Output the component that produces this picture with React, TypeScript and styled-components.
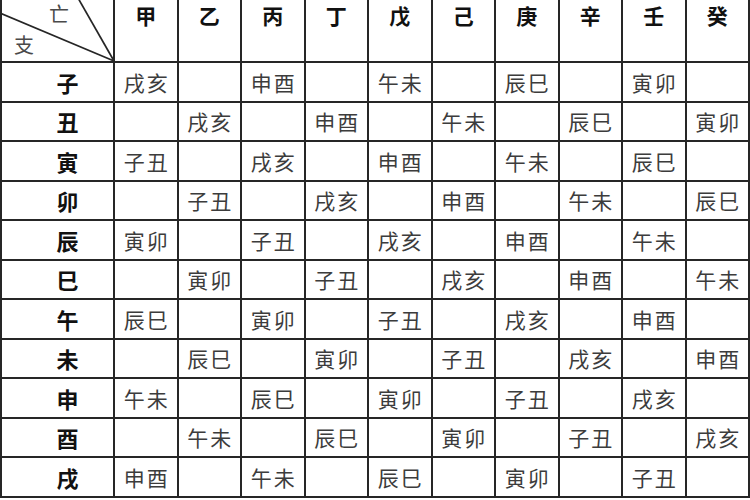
import React from 'react';
import styled, {createGlobalStyle} from 'styled-components';

const GlobalStyle = createGlobalStyle`
  html, body {
    margin: 0;
    padding: 0;
    background: #ffffff;
    overflow: hidden;
  }
  body {
    width: 750px;
    height: 500px;
    font-family: "Noto Sans CJK SC", "Noto Sans", sans-serif;
  }
`;

const lineColor = '#262626';

const stems = ['甲', '乙', '丙', '丁', '戊', '己', '庚', '辛', '壬', '癸'];
const branches = ['子', '丑', '寅', '卯', '辰', '巳', '午', '未', '申', '酉', '戌', '亥'];
// only the rows down to 戌 fit in the frame
const shownBranches = branches.slice(0, 11);

const Table = styled.div`
  display: grid;
  grid-template-columns: 115px repeat(10, 63.5px);
  grid-template-rows: 63px;
  grid-auto-rows: 39.5px;
  width: 750px;
`;

const Cell = styled.div`
  box-sizing: border-box;
  border-right: 2px solid ${lineColor};
  border-bottom: 2px solid ${lineColor};
  display: flex;
  align-items: center;
  justify-content: center;
`;

const Corner = styled(Cell)`
  position: relative;
  border-left: 2px solid ${lineColor};
`;

const CornerLines = styled.svg`
  position: absolute;
  left: 0;
  top: 0;
  overflow: visible;
`;

const CornerLabel = styled.span<{ $left: number; $top: number }>`
  position: absolute;
  left: ${p => p.$left}px;
  top: ${p => p.$top}px;
  font-size: 20px;
  line-height: 20px;
  color: #4a4a4a;
`;

const StemHead = styled(Cell)`
  align-items: flex-start;
  padding-top: 4px;
  font-size: 21px;
  line-height: 22px;
  font-weight: 700;
  color: #111;
`;

const BranchHead = styled(Cell)`
  border-left: 2px solid ${lineColor};
  padding-left: 20px;
  font-size: 22px;
  font-weight: 700;
  color: #111;
`;

const Void = styled(Cell)`
  font-size: 21px;
  letter-spacing: 2px;
  padding-left: 2px;
  color: #3c3c3c;
`;

function voidPair(b: number, s: number) {
  if ((b - s) % 2 !== 0) return '';
  const a = (b - s + 22) % 12;
  const c = (b - s + 23) % 12;
  return branches[a] + branches[c];
}

export default function App() {
  return (
    <>
      <GlobalStyle />
      <Table>
        <Corner>
          <CornerLines width="111" height="61" viewBox="0 0 111 61">
            <line x1="-2" y1="13" x2="112" y2="61" stroke={lineColor} strokeWidth="1.7" />
            <line x1="76" y1="-2" x2="112" y2="61" stroke={lineColor} strokeWidth="1.7" />
          </CornerLines>
          <CornerLabel $left={47} $top={4}>亡</CornerLabel>
          <CornerLabel $left={12} $top={35}>支</CornerLabel>
        </Corner>
        {stems.map(s => (
          <StemHead key={s}>{s}</StemHead>
        ))}
        {shownBranches.map((b, bi) => (
          <React.Fragment key={b}>
            <BranchHead>{b}</BranchHead>
            {stems.map((s, si) => (
              <Void key={s}>{voidPair(bi, si)}</Void>
            ))}
          </React.Fragment>
        ))}
      </Table>
    </>
  );
}
